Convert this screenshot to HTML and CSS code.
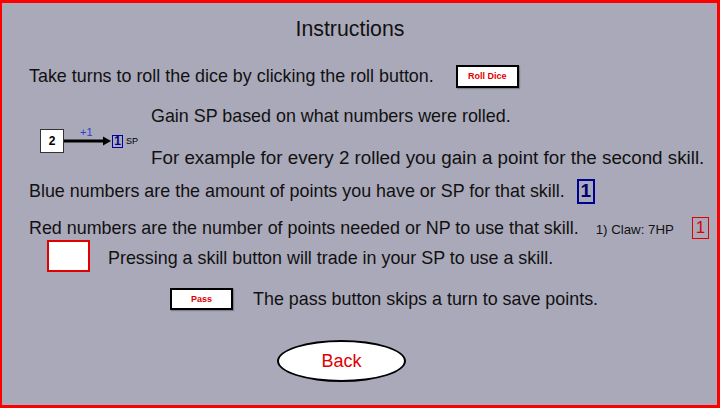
FILE: index.html
```html
<!DOCTYPE html>
<html>
<head>
<meta charset="utf-8">
<link rel="stylesheet" href="styles.css">
</head>
<body>
<div class="frame">
  <h1 class="title">Instructions</h1>

  <div class="row row-roll">
    <span class="txt">Take turns to roll the dice by clicking the roll button.</span>
    <span class="btn btn-roll">Roll Dice</span>
  </div>

  <div class="gain">
    <div class="diagram">
      <span class="die">2</span>
      <span class="arrow">
        <span class="plus">+1</span>
        <svg width="48" height="10" viewBox="0 0 48 10"><line x1="0" y1="5" x2="42" y2="5" stroke="#000" stroke-width="2.8"/><polygon points="39,0.5 47,5 39,9.5" fill="#000"/></svg>
      </span>
      <span class="sp-box">1</span>
      <span class="sp-lbl">SP</span>
    </div>
    <div class="gain-text">
      <div class="line">Gain SP based on what numbers were rolled.</div>
      <div class="line line-big">For example for every 2 rolled you gain a point for the second skill.</div>
    </div>
  </div>

  <div class="row row-blue">
    <span class="txt">Blue numbers are the amount of points you have or SP for that skill.</span>
    <span class="blue-num">1</span>
  </div>

  <div class="row row-red">
    <span class="txt">Red numbers are the number of points needed or NP to use that skill.</span>
    <span class="claw">1) Claw: 7HP</span>
    <span class="red-num">1</span>
  </div>

  <div class="row row-skill">
    <span class="skill-box"></span>
    <span class="txt txt-low">Pressing a skill button will trade in your SP to use a skill.</span>
  </div>

  <div class="row row-pass">
    <span class="btn btn-pass">Pass</span>
    <span class="txt">The pass button skips a turn to save points.</span>
  </div>

  <div class="back-wrap">
    <span class="back">Back</span>
  </div>
</div>
</body>
</html>
```

FILE: styles.css
```css
html, body {
  margin: 0;
  padding: 0;
}
body {
  width: 720px;
  height: 408px;
  font-family: "Liberation Sans", Arial, sans-serif;
  color: #111;
}
.frame {
  box-sizing: border-box;
  width: 720px;
  height: 408px;
  border: 3px solid #f00;
  border-left-width: 2px;
  background: #aaa9b9;
  display: flex;
  flex-direction: column;
}
.title {
  margin: 0;
  height: 52px;
  display: flex;
  align-items: center;
  justify-content: center;
  font-weight: normal;
  font-size: 21.3px;
  padding-right: 19px;
}
.row {
  display: flex;
  align-items: center;
}
.txt {
  font-size: 17.9px;
  white-space: nowrap;
}
.txt-low {
  padding-top: 4px;
}
.row-roll {
  margin-top: 9px;
  height: 24px;
  padding-left: 27px;
}
.btn {
  box-sizing: border-box;
  display: inline-flex;
  align-items: center;
  justify-content: center;
  background: #fff;
  border: 2px solid #000;
  color: #e00000;
  font-weight: bold;
  font-size: 9px;
  box-shadow: 1px 1px 1px rgba(0,0,0,0.25);
}
.btn-roll {
  width: 63px;
  height: 23px;
  margin-left: 22px;
}
.gain {
  margin-top: 16px;
  display: flex;
  height: 66px;
}
.diagram {
  width: 149px;
  display: flex;
  align-items: center;
  padding-left: 38px;
  box-sizing: border-box;
  padding-top: 8px;
}
.die {
  box-sizing: border-box;
  width: 24px;
  height: 24px;
  background: #fff;
  border: 1px solid #333;
  display: flex;
  align-items: center;
  justify-content: center;
  font-weight: bold;
  font-size: 12px;
  color: #000;
}
.arrow {
  position: relative;
  display: flex;
  align-items: center;
}
.arrow svg {
  display: block;
}
.plus {
  position: absolute;
  left: 16px;
  top: -10px;
  font-size: 11px;
  color: #2a3fd6;
}
.sp-box {
  box-sizing: border-box;
  width: 11px;
  height: 13px;
  border: 1px solid #0000a0;
  display: flex;
  align-items: center;
  justify-content: center;
  font-weight: bold;
  font-size: 12px;
  color: #000080;
  margin-left: 0;
}
.sp-lbl {
  font-size: 9px;
  margin-left: 3px;
  color: #000;
}
.gain-text {
  display: flex;
  flex-direction: column;
  justify-content: space-between;
}
.gain-text .line {
  font-size: 17.9px;
  height: 24px;
  line-height: 24px;
  white-space: nowrap;
}
.gain-text .line-big {
  font-size: 18.8px;
}
.row-blue {
  margin-top: 10px;
  height: 22px;
  padding-left: 27px;
}
.blue-num {
  box-sizing: border-box;
  width: 18px;
  height: 25px;
  margin-left: 12px;
  border: 2px solid #000090;
  display: flex;
  align-items: center;
  justify-content: center;
  font-weight: bold;
  font-size: 19px;
  color: #000070;
}
.row-red {
  margin-top: 15px;
  height: 22px;
  padding-left: 27px;
}
.claw {
  font-size: 13.3px;
  margin-left: 17px;
  margin-top: 3px;
}
.red-num {
  box-sizing: border-box;
  width: 17px;
  height: 22px;
  margin-left: 18px;
  border: 1px solid #e00000;
  display: flex;
  align-items: center;
  justify-content: center;
  font-size: 17px;
  color: #e00000;
}
.row-skill {
  height: 34px;
  padding-left: 45px;
}
.skill-box {
  box-sizing: border-box;
  width: 43px;
  height: 32px;
  background: #fff;
  border: 2px solid #e00000;
  margin-right: 18px;
}
.row-pass {
  margin-top: 15px;
  height: 22px;
  padding-left: 168px;
}
.btn-pass {
  width: 63px;
  height: 22px;
  margin-right: 20px;
}
.back-wrap {
  margin-top: 30px;
  display: flex;
  justify-content: center;
  padding-right: 36px;
}
.back {
  box-sizing: border-box;
  width: 129px;
  height: 42px;
  border-radius: 50%;
  background: #fff;
  border: 2px solid #000;
  display: flex;
  align-items: center;
  justify-content: center;
  color: #e00000;
  font-size: 18px;
}
```
